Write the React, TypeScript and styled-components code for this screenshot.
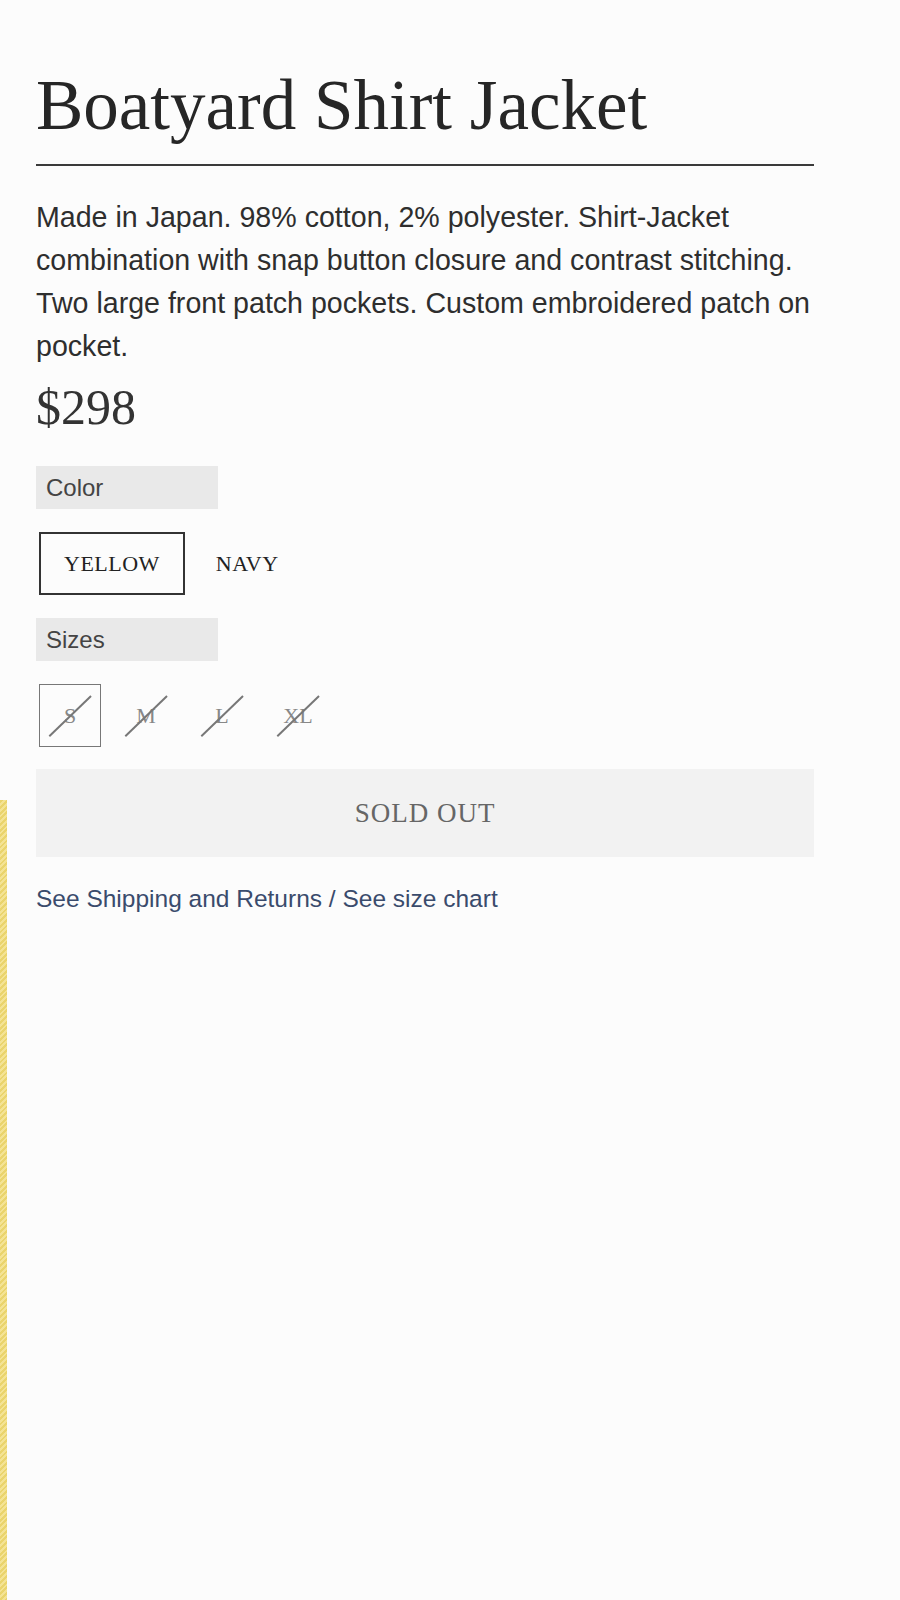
import styled, { createGlobalStyle } from 'styled-components';

const colors = ['YELLOW', 'NAVY'];
const sizes = ['S', 'M', 'L', 'XL'];

const App = () => {
  return (
    <Page>
      <GlobalStyle />
      <Edge>
        <Stripe />
      </Edge>
      <Main>
        <Title>Boatyard Shirt Jacket</Title>
        <Rule />
        <Description>
          Made in Japan. 98% cotton, 2% polyester. Shirt-Jacket combination with snap button
          closure and contrast stitching. Two large front patch pockets. Custom embroidered patch
          on pocket.
        </Description>
        <Price>$298</Price>
        <OptionLabel>Color</OptionLabel>
        <OptionRow $gap={31}>
          {colors.map((c, i) => (
            <ColorOption key={c} $active={i === 0}>
              {c}
            </ColorOption>
          ))}
        </OptionRow>
        <OptionLabel>Sizes</OptionLabel>
        <OptionRow $gap={14}>
          {sizes.map((s, i) => (
            <SizeOption key={s} $active={i === 0}>
              {s}
            </SizeOption>
          ))}
        </OptionRow>
        <SoldOut disabled>SOLD OUT</SoldOut>
        <Links>
          <a href="#shipping">See Shipping and Returns</a> / <a href="#size">See size chart</a>
        </Links>
      </Main>
    </Page>
  );
};

export default App;

const GlobalStyle = createGlobalStyle`
  * {
    box-sizing: border-box;
  }
  body {
    margin: 0;
    background: #fcfcfc;
    font-family: 'Liberation Sans', Arial, sans-serif;
  }
`;

const Page = styled.div`
  display: flex;
  width: 900px;
  min-height: 1600px;
  background: #fcfcfc;
`;

const Edge = styled.div`
  width: 7px;
  flex-shrink: 0;
  display: flex;
  flex-direction: column;
  padding-top: 800px;
`;

const Stripe = styled.div`
  flex: 1;
  background: repeating-linear-gradient(
    -45deg,
    #ead46c 0px,
    #ead46c 2px,
    #f4e394 2px,
    #f4e394 4px
  );
`;

const Main = styled.div`
  width: 810px;
  padding: 70px 0 0 29px;
  display: flex;
  flex-direction: column;
  align-items: flex-start;
`;

const Title = styled.h1`
  margin: 0;
  font-family: 'Liberation Serif', 'Times New Roman', serif;
  font-weight: 400;
  font-size: 71px;
  line-height: 71px;
  color: #262626;
`;

const Rule = styled.hr`
  width: 778px;
  margin: 23px 0 0;
  border: none;
  border-top: 2px solid #3a3a3a;
`;

const Description = styled.p`
  width: 781px;
  margin: 30px 0 0;
  font-size: 28.6px;
  line-height: 43px;
  color: #2e2e2e;
`;

const Price = styled.div`
  margin-top: 13px;
  font-family: 'Liberation Serif', 'Times New Roman', serif;
  font-size: 50px;
  line-height: 52px;
  color: #333;
`;

const OptionLabel = styled.div`
  width: 182px;
  height: 43px;
  margin-top: 33px;
  padding-left: 10px;
  display: flex;
  align-items: center;
  background: #e9e9e9;
  font-size: 24px;
  color: #444;

  & + div {
    margin-top: 23px;
  }
`;

const OptionRow = styled.div<{ $gap?: number }>`
  display: flex;
  align-items: center;
  gap: ${(p) => p.$gap ?? 28}px;
  margin-left: 3px;
  margin-bottom: -10px;
`;

const ColorOption = styled.button<{ $active?: boolean }>`
  height: 63px;
  padding: 0 ${(p) => (p.$active ? 23 : 0)}px;
  background: transparent;
  border: ${(p) => (p.$active ? '2px solid #333' : 'none')};
  font-family: 'Liberation Serif', 'Times New Roman', serif;
  font-size: 22px;
  letter-spacing: 0.5px;
  color: #222;
  cursor: pointer;
`;

const SizeOption = styled.button<{ $active?: boolean }>`
  position: relative;
  width: 62px;
  height: 63px;
  padding: 0;
  background: transparent;
  border: ${(p) => (p.$active ? '1.5px solid #777' : '1.5px solid transparent')};
  font-family: 'Liberation Serif', 'Times New Roman', serif;
  font-size: 22px;
  color: #888;
  cursor: not-allowed;

  &::after {
    content: '';
    position: absolute;
    left: 50%;
    top: 50%;
    width: 58px;
    height: 1.5px;
    background: #777;
    transform: translate(-50%, -50%) rotate(-44deg);
  }
`;

const SoldOut = styled.button`
  width: 778px;
  height: 88px;
  margin-top: 32px;
  border: none;
  background: #f2f2f2;
  font-family: 'Liberation Serif', 'Times New Roman', serif;
  font-size: 27px;
  letter-spacing: 1px;
  color: #666;
`;

const Links = styled.div`
  margin-top: 28px;
  font-size: 24.5px;
  line-height: 28px;
  color: #3a4b6c;

  a {
    color: inherit;
    text-decoration: none;
  }
`;
